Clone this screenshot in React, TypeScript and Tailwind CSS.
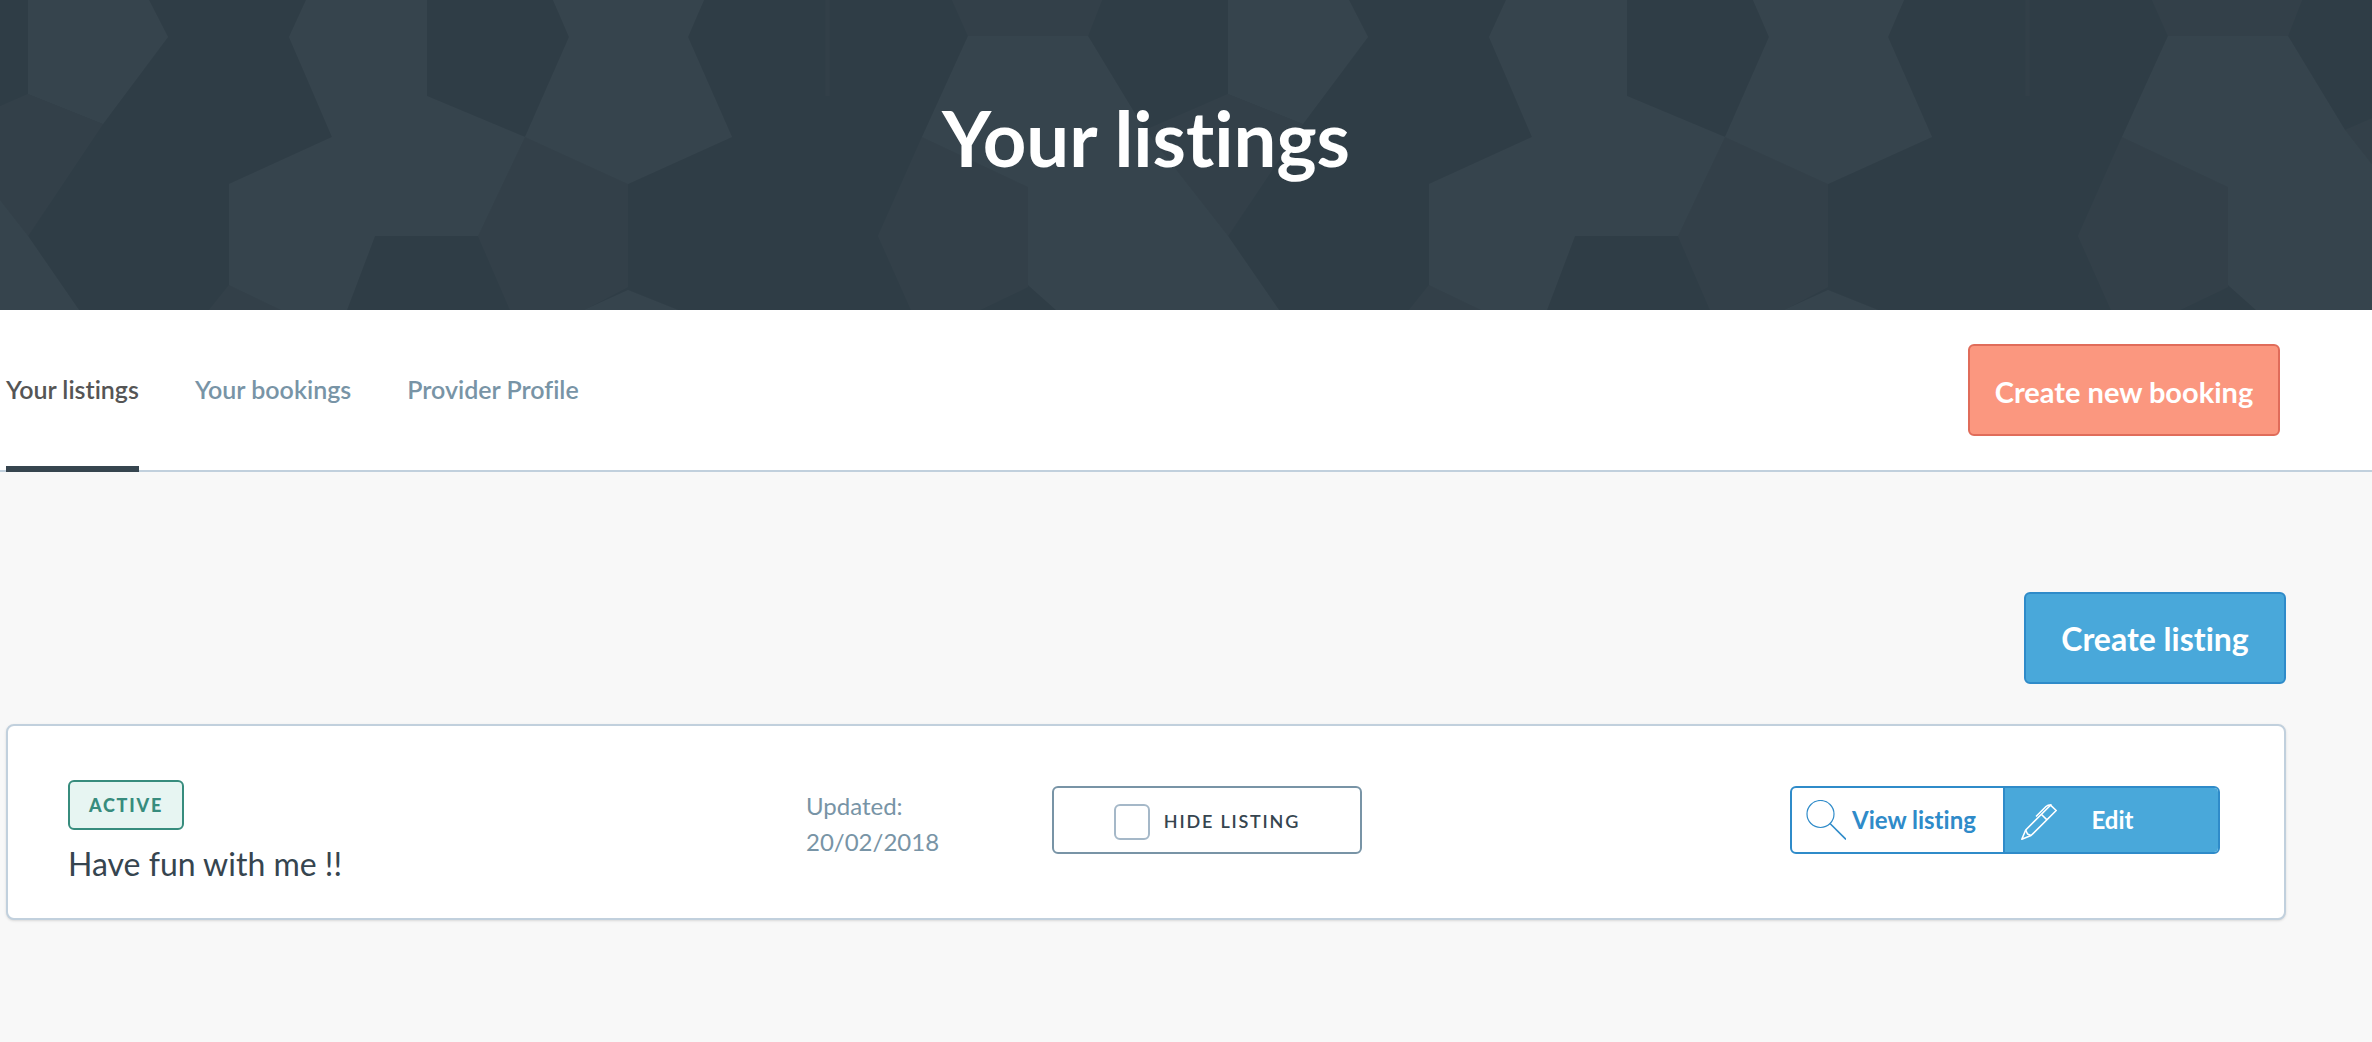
import React from 'react';

interface Tab {
  label: string;
  active?: boolean;
}

interface Listing {
  title: string;
  status: string;
  updated: string;
}

const tabs: Tab[] = [
  { label: 'Your listings', active: true },
  { label: 'Your bookings' },
  { label: 'Provider Profile' },
];

const listings: Listing[] = [
  { title: 'Have fun with me !!', status: 'ACTIVE', updated: '20/02/2018' },
];

const midShapes = [
  '1228,94 1303,124 1228,236 1145,130',
  '229,285 281,310 209,310',
  '525,137 628,184 628,287 584,310 510,310 478,236',
  '952,0 1102,0 1088,36 968,36',
  '922,137 1028,187 1028,287 980,310 911,310 878,236',
];

const lightShapes = [
  '28,0 149,0 168,37 103,124 28,94',
  '306,0 427,0 427,96 525,137 478,236 375,236 347,310 281,310 229,285 229,184 332,137 289,37',
  '553,0 704,0 688,37 732,137 628,184 525,137 569,37',
  '628,290 678,310 584,310',
  '968,36 1088,36 1145,130 1228,236 1279,310 1056,310 1028,285 1028,187 922,137',
];

const HeroPattern: React.FC = () => (
  <svg className="absolute inset-0 h-full w-full" aria-hidden="true">
    <defs>
      <pattern id="hero-tile" width="1200" height="310" patternUnits="userSpaceOnUse">
        <rect width="1200" height="310" fill="#2f3d46" />
        {/* second copy carries the shapes that cross the tile edge */}
        {[0, -1200].map((x) => (
          <g key={x} transform={`translate(${x} 0)`}>
            {midShapes.map((points) => (
              <polygon key={points} points={points} fill="#334049" />
            ))}
            {lightShapes.map((points) => (
              <polygon key={points} points={points} fill="#36444d" />
            ))}
          </g>
        ))}
        <path d="M827.5 0V96" stroke="#323f48" strokeWidth="4" />
      </pattern>
    </defs>
    <rect width="100%" height="100%" fill="url(#hero-tile)" />
  </svg>
);

const SearchIcon: React.FC = () => (
  <svg className="h-10 w-10 shrink-0" viewBox="0 0 40 40" fill="none" stroke="currentColor" aria-hidden="true">
    <circle cx="14.5" cy="14" r="13.5" strokeWidth="1.2" />
    <path d="M24 23.5 40 39.5" strokeWidth="1.6" />
  </svg>
);

const PenIcon: React.FC = () => (
  <svg
    className="h-9 w-9 shrink-0"
    viewBox="0 0 36 36"
    fill="none"
    stroke="currentColor"
    strokeWidth="1.6"
    strokeLinejoin="round"
    aria-hidden="true"
  >
    <path d="M.8 35.2 4.7 26 29.5 1.2 35.2 6.5 10 31.5Z" />
    <path d="M4.7 26 6.5 30 10 31.5" />
    <path d="M20.5 10.5 26 15.8" />
    <path d="M15 12.5 25 2.5C26.3 1.2 27.5.9 30.5.9" />
  </svg>
);

const ListingCard: React.FC<{ listing: Listing }> = ({ listing }) => (
  <article className="grid grid-cols-[738fr_246fr_738fr_430fr] items-start rounded-lg border-2 border-[#c1d0dd] bg-white pt-[54px] pr-16 pb-[34px] pl-[60px] shadow-sm">
    <div>
      <span className="inline-flex h-[50px] w-[116px] items-center justify-center rounded-md border-2 border-[#378c7d] bg-[#e7f5f2] text-lg font-black tracking-widest text-[#378c7d]">
        {listing.status}
      </span>
      <h2 className="mt-3.5 text-[32px] leading-10 text-[#36454f]">{listing.title}</h2>
    </div>
    <p className="pt-2 text-2xl leading-9 text-[#7894a6]">
      Updated:
      <br />
      {listing.updated}
    </p>
    <label className="mt-1.5 flex h-[68px] w-[310px] items-center justify-center gap-[14px] rounded-md border-2 border-[#7894a6] text-lg font-semibold tracking-widest text-[#36454f]">
      <input
        type="checkbox"
        className="mt-1 h-9 w-9 appearance-none rounded-md border-2 border-[#a5b8c8] bg-white checked:bg-[#49a8da]"
      />
      <span className="pt-0.5">HIDE LISTING</span>
    </label>
    <div className="mt-1.5 flex h-[68px] overflow-hidden rounded-md border-2 border-[#2f8bc9] text-2xl font-bold">
      <button
        type="button"
        className="flex w-1/2 items-center gap-1.5 border-r-2 border-[#2f8bc9] pl-3.5 whitespace-nowrap text-[#2f8bc9]"
      >
        <SearchIcon />
        <span>View listing</span>
      </button>
      <button type="button" className="flex w-1/2 items-center bg-[#49a8da] pt-2 pr-[50px] pb-1 pl-4 text-white">
        <PenIcon />
        <span className="flex-1 pb-1">Edit</span>
      </button>
    </div>
  </article>
);

const App: React.FC = () => (
  <div className="min-h-screen bg-[#f8f8f8] font-['Lato',sans-serif] [font-variant-ligatures:none]">
    <header className="relative h-[310px] pr-[86px] pl-1.5">
      <HeroPattern />
      <h1 className="relative pt-[94px] text-center text-[76px] leading-[88px] font-bold text-white">
        Your listings
      </h1>
    </header>

    <div className="flex h-[162px] items-center justify-between border-b-2 border-[#c1d0dd] bg-white pr-[92px] pl-1.5">
      <nav className="-mb-0.5 flex gap-14 self-stretch text-[25px] font-semibold">
        {tabs.map((tab) => (
          <a
            key={tab.label}
            href="#"
            className={
              tab.active
                ? 'flex items-center border-b-6 border-[#36454f] pt-1 text-[#555]'
                : 'flex items-center border-b-6 border-transparent pt-1 text-[#7894a6]'
            }
          >
            {tab.label}
          </a>
        ))}
      </nav>
      <button
        type="button"
        className="h-[92px] w-[312px] rounded-md border-2 border-[#e06c5a] bg-[#fb977f] pt-1 text-[29px] font-bold text-white"
      >
        Create new booking
      </button>
    </div>

    <main className="pt-[120px] pr-[86px] pl-1.5">
      <div className="mb-10 flex justify-end">
        <button
          type="button"
          className="h-[92px] w-[262px] rounded-md border-2 border-[#2f8bc9] bg-[#49a8da] pt-0.5 text-[32px] font-bold text-white"
        >
          Create listing
        </button>
      </div>
      {listings.map((listing) => (
        <ListingCard key={listing.title} listing={listing} />
      ))}
    </main>
  </div>
);

export default App;
